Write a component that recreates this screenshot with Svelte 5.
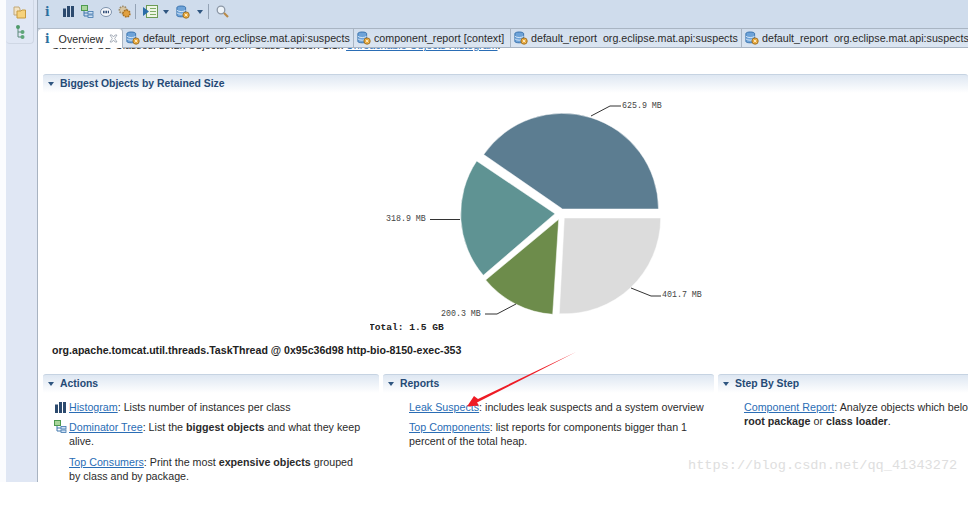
<script>
  const reportTabs = [
    { label: 'default_report  org.eclipse.mat.api:suspects', width: 231 },
    { label: 'component_report [context]', width: 157 },
    { label: 'default_report  org.eclipse.mat.api:suspects', width: 231 },
    { label: 'default_report  org.eclipse.mat.api:suspects', width: 231 }
  ];

  const slices = [
    { color: '#5c7d91', d: 'M562.5 208 H658.5 A96 96 0 0 0 483.7 153.5 Z' },
    { color: '#5f9393', d: 'M555 212.7 L476.7 160 A95 95 0 0 0 483.3 274.3 Z' },
    { color: '#6d8c4b', d: 'M558.7 218.3 L485.7 279 A95 95 0 0 0 552.7 313.3 Z' },
    { color: '#dcdcdc', d: 'M564.3 217 H660.7 A96 96 0 0 1 559.3 312.7 Z' }
  ];

  const labels = [
    { text: '625.9 MB', x: 622, y: 107, line: 'M591 115 L610 105 H621' },
    { text: '318.9 MB', x: 386, y: 220, line: 'M430 218.5 H460' },
    { text: '200.3 MB', x: 441, y: 315, line: 'M485 313 H497 L516 303' },
    { text: '401.7 MB', x: 662, y: 296, line: 'M631 287 L651 295 H661' }
  ];
</script>

{#snippet dbIcon()}
  <svg class="tab-icon" width="14" height="14" viewBox="0 0 16 16">
    <path d="M1 3 C1 0.5 11 0.5 11 3 V12 C11 14 1 14 1 12 Z" fill="#6ea3d8" stroke="#2f6aa8" />
    <path d="M1 6 C3 8 9 8 11 6 M1 9 C3 11 9 11 11 9" fill="none" stroke="#e4effa" />
    <circle cx="11.5" cy="11.5" r="3.6" fill="#e9a93c" stroke="#9a6a1c" />
    <path d="M10 10 L13 13 M13 10 L10 13" stroke="#fff3d6" />
  </svg>
{/snippet}

{#snippet domIcon()}
  <svg width="13" height="13" viewBox="0 0 13 13">
    <rect x="0.5" y="0.5" width="6" height="5" fill="#a9d59b" stroke="#4d9a50" />
    <path d="M3 6 V11 H7 M3 8 H7" fill="none" stroke="#3f77ad" />
    <rect x="7" y="6.5" width="5" height="2.5" fill="#cfe2f5" stroke="#3f77ad" stroke-width="0.8" />
    <rect x="7" y="10" width="5" height="2.5" fill="#cfe2f5" stroke="#3f77ad" stroke-width="0.8" />
  </svg>
{/snippet}

{#snippet barsIcon()}
  <svg width="11" height="11" viewBox="0 0 11 11">
    <path d="M0 2.5 H3 V11 H0 Z M4 0 H7 V11 H4 Z M8 0 H11 V11 H8 Z" fill="#2c4a6e" />
  </svg>
{/snippet}

{#snippet caret()}
  <svg class="caret" width="6" height="4" viewBox="0 0 6 4"><path d="M0 0 H6 L3 4 Z" fill="#2f5680" /></svg>
{/snippet}

<div class="app">
  <div class="edge"></div>

  <aside class="rail">
    <div class="trim">
      <svg width="14" height="13" viewBox="0 0 14 13">
        <path d="M1 1 H6 L7 3 V9 H1 Z" fill="#f3e3c3" stroke="#c2a878" />
        <path d="M4 5 H8 L9 4 H12.5 V12 H4 Z" fill="#f6d27c" stroke="#c79a3f" />
      </svg>
      <svg width="10" height="14" viewBox="0 0 10 14">
        <path d="M3 2 V12 H7 M3 7 H7" fill="none" stroke="#5d8a7a" />
        <circle cx="3" cy="2" r="2" fill="#4f9a6a" />
        <circle cx="7.5" cy="7" r="2" fill="#5fa678" />
        <circle cx="7.5" cy="12" r="2" fill="#5fa678" />
      </svg>
    </div>
  </aside>

  <main class="main">
    <div class="toolbar">
      <span class="info">i</span>
      <span class="tool bars">{@render barsIcon()}</span>
      <span class="tool dom">{@render domIcon()}</span>
      <svg class="tool oql" width="12" height="10" viewBox="0 0 12 10">
        <ellipse cx="6" cy="5" rx="5.5" ry="4.5" fill="#f4f6fa" stroke="#7f93ad" />
        <path d="M3 5 H9" stroke="#33507a" stroke-width="2.4" stroke-dasharray="1.6 .8" />
      </svg>
      <svg class="tool cog" width="13" height="13" viewBox="0 0 13 13">
        <circle cx="5" cy="5" r="3.6" fill="#d9c7a3" stroke="#9c8a68" stroke-width="1.6" stroke-dasharray="1.6 1" />
        <circle cx="8.5" cy="8.5" r="3.4" fill="#e2a13f" stroke="#a86f1f" stroke-width="1.6" stroke-dasharray="1.6 1" />
      </svg>
      <span class="sep"></span>
      <svg class="tool run" width="15" height="13" viewBox="0 0 15 13">
        <rect x="3.5" y="0.5" width="11" height="12" fill="#eef5e6" stroke="#6c9b55" />
        <path d="M7 3.5 H13 M7 6.5 H13 M7 9.5 H13" stroke="#7fae68" />
        <path d="M0 2 L6 6.5 L0 11 Z" fill="#2a6ca8" />
      </svg>
      {@render caret()}
      <span class="tool db">{@render dbIcon()}</span>
      {@render caret()}
      <span class="sep second"></span>
      <svg class="tool search" width="13" height="13" viewBox="0 0 13 13">
        <circle cx="5" cy="5" r="3.8" fill="#eef4fa" stroke="#8d98a6" stroke-width="1.3" />
        <path d="M8 8 L12 12" stroke="#b98a48" stroke-width="2.2" />
      </svg>
    </div>

    <div class="tabs">
      <div class="tab active">
        <span class="info small">i</span>
        <span class="tab-label">Overview</span>
        <svg class="close" width="9" height="9" viewBox="0 0 9 9">
          <path d="M1 1 L3 1 L4.5 3 L6 1 L8 1 L5.7 4.5 L8 8 L6 8 L4.5 6 L3 8 L1 8 L3.3 4.5 Z" fill="#fff" stroke="#8c97a5" stroke-width="0.7" />
        </svg>
      </div>
      {#each reportTabs as tab}
        <div class="tab" style="width: {tab.width}px">
          {@render dbIcon()}
          <span class="tab-label">{tab.label}</span>
        </div>
      {/each}
    </div>

    <div class="page">
      <p class="scrolled">Size: 1.5 GB Classes: 25.2k Objects: 30m Class Loader: 1.1k <a href="#top">Unreachable Objects Histogram</a>.</p>

      <section class="panel wide">
        <h3 class="panel-head"><span class="twist"></span>Biggest Objects by Retained Size</h3>
        <svg class="pie" width="350" height="250" viewBox="370 90 350 250">
          {#each slices as s}
            <path d={s.d} fill={s.color} stroke="#fff" stroke-width="0.5" />
          {/each}
          {#each labels as l}
            <path d={l.line} fill="none" stroke="#333" />
            <text x={l.x} y={l.y} class="pie-label">{l.text}</text>
          {/each}
          <text x="369" y="329" class="pie-total">Total: 1.5 GB</text>
        </svg>
        <p class="thread">org.apache.tomcat.util.threads.TaskThread @ 0x95c36d98 http-bio-8150-exec-353</p>
      </section>

      <div class="columns">
        <section class="panel actions">
          <h3 class="panel-head"><span class="twist"></span>Actions</h3>
          <div class="body">
            <p><span class="row-icon">{@render barsIcon()}</span><a href="#top">Histogram</a>: Lists number of instances per class</p>
            <p><span class="row-icon dom-row">{@render domIcon()}</span><a href="#top">Dominator Tree</a>: List the <b>biggest objects</b> and what they keep alive.</p>
            <p><a href="#top">Top Consumers</a>: Print the most <b>expensive objects</b> grouped by class and by package.</p>
          </div>
        </section>
        <section class="panel">
          <h3 class="panel-head"><span class="twist"></span>Reports</h3>
          <div class="body">
            <p><a href="#top">Leak Suspects</a>: includes leak suspects and a system overview</p>
            <p><a href="#top">Top Components</a>: list reports for components bigger than 1 percent of the total heap.</p>
          </div>
        </section>
        <section class="panel">
          <h3 class="panel-head"><span class="twist"></span>Step By Step</h3>
          <div class="body">
            <p><a href="#top">Component Report</a>: Analyze objects which belong to a common <b>root package</b> or <b>class loader</b>.</p>
          </div>
        </section>
      </div>
    </div>
  </main>

  <!-- annotation pasted on top of the screenshot -->
  <svg class="arrow" width="120" height="62" viewBox="465 350 120 62">
    <path d="M576 352 L478 399 L474 396 L467 406.5 L479 405.5 L477 402.5 Z" fill="#ee1c25" />
  </svg>
  <span class="watermark">https://blog.csdn.net/qq_41343272</span>
</div>

<style>
  :global(body) {
    background: #fff;
  }

  .app {
    position: relative;
    display: grid;
    grid-template-columns: 6px 31px 1fr;
    width: 968px;
    height: 482px;
    overflow: hidden;
    font-family: "Liberation Sans", Arial, sans-serif;
    font-size: 10.7px;
    color: #2b2b2b;
  }

  .edge {
    background: #fbfcfe;
  }

  .rail {
    background: #e0e7f4;
    padding-right: 3px;
  }

  .trim {
    display: flex;
    flex-direction: column;
    align-items: center;
    gap: 6px;
    height: 44px;
    padding-top: 6px;
    box-sizing: border-box;
    border: solid #cfd7e4;
    border-width: 0 1px 1px 0;
    border-radius: 0 0 4px 4px;
  }

  .main {
    display: flex;
    flex-direction: column;
    min-width: 0;
    border-left: 1px solid #a8b3c1;
  }

  .toolbar {
    display: flex;
    align-items: center;
    height: 28px;
    flex: none;
    padding-bottom: 5px;
    box-sizing: border-box;
    background: #cfdcec;
  }

  .info {
    margin-left: 7px;
    font-family: "DejaVu Serif", serif;
    font-weight: bold;
    font-size: 12px;
    line-height: 1;
    color: #2c6f9e;
  }

  .tool {
    display: flex;
    flex: none;
  }

  .bars { margin-left: 13px; }
  .dom { margin-left: 7px; }
  .oql { margin-left: 6px; }
  .cog { margin-left: 6px; }
  .run { margin-left: 7px; }
  .db { margin: 0 2px 0 7px; }
  .search { margin-left: 7px; }

  .caret {
    margin-left: 5px;
    flex: none;
  }

  .sep {
    width: 1px;
    height: 15px;
    margin-left: 4px;
    background: #94a3b5;
  }

  .sep.second {
    margin-left: 5px;
  }

  .tabs {
    display: flex;
    height: 20px;
    flex: none;
    box-sizing: border-box;
    border-top: 1px solid #a9b5c3;
    border-bottom: 1px solid #a9b5c3;
    background: linear-gradient(#d2deed, #dbe5f1);
    white-space: pre;
  }

  .tab {
    display: flex;
    align-items: center;
    flex: none;
    gap: 3px;
    padding-left: 3px;
    box-sizing: border-box;
    border-right: 1px solid #a9b5c3;
    overflow: hidden;
  }

  .tab-icon {
    flex: none;
  }

  .tab.active {
    width: 85px;
    margin-top: -1px;
    height: 20px;
    background: #fff;
    border-top: 1px solid #b3bdca;
    border-radius: 4px 4px 0 0;
    gap: 0;
    padding-left: 0;
  }

  .info.small {
    margin: 0 9px 0 7px;
  }

  .close {
    margin-left: 6px;
  }

  .page {
    flex: 1;
    min-height: 0;
    overflow: hidden;
    background: #fff;
  }

  .scrolled {
    margin: -9px 0 0 14px;
    height: 13px;
    line-height: 12px;
    white-space: nowrap;
  }

  a {
    color: #2a6db5;
    text-decoration: underline;
  }

  .panel-head {
    display: flex;
    align-items: center;
    height: 19px;
    margin: 0;
    padding: 0 0 1px 5px;
    box-sizing: border-box;
    border-top: 1px solid #c6d3e2;
    border-radius: 3px 3px 0 0;
    background: linear-gradient(#dee7f2, #fff);
    font-size: 10.4px;
    font-weight: bold;
    color: #254a75;
  }

  .twist {
    width: 0;
    height: 0;
    margin-right: 6px;
    border: solid transparent;
    border-width: 4px 3.5px 0;
    border-top-color: #2f5680;
  }

  .panel.wide {
    margin: 22px 0 0 5px;
  }

  .pie {
    display: block;
    margin: -2px 0 0 327px;
  }

  .pie-label {
    font-family: "Liberation Mono", monospace;
    font-size: 8.3px;
    fill: #444;
  }

  .pie-total {
    font-family: "Liberation Mono", monospace;
    font-size: 9.6px;
    font-weight: bold;
    fill: #222;
  }

  .thread {
    margin: 2px 0 0 9px;
    height: 31px;
    line-height: 14px;
    font-size: 10.6px;
    font-weight: bold;
    color: #222;
  }

  .columns {
    display: grid;
    grid-template-columns: 336px 331px 350px;
    gap: 4px;
    margin-left: 5px;
  }

  .body {
    padding: 7px 8px 0 26px;
  }

  .actions .body {
    padding-right: 14px;
  }

  .body p {
    position: relative;
    margin: 0 0 6.4px;
    line-height: 14px;
  }

  .row-icon {
    position: absolute;
    left: -14px;
    top: 2px;
  }

  .dom-row {
    left: -15px;
    top: 0;
  }

  .arrow {
    position: absolute;
    left: 465px;
    top: 350px;
  }

  .watermark {
    position: absolute;
    left: 688px;
    top: 458px;
    font-family: "Liberation Mono", monospace;
    font-size: 13.6px;
    line-height: 16px;
    color: #dedede;
  }
</style>
